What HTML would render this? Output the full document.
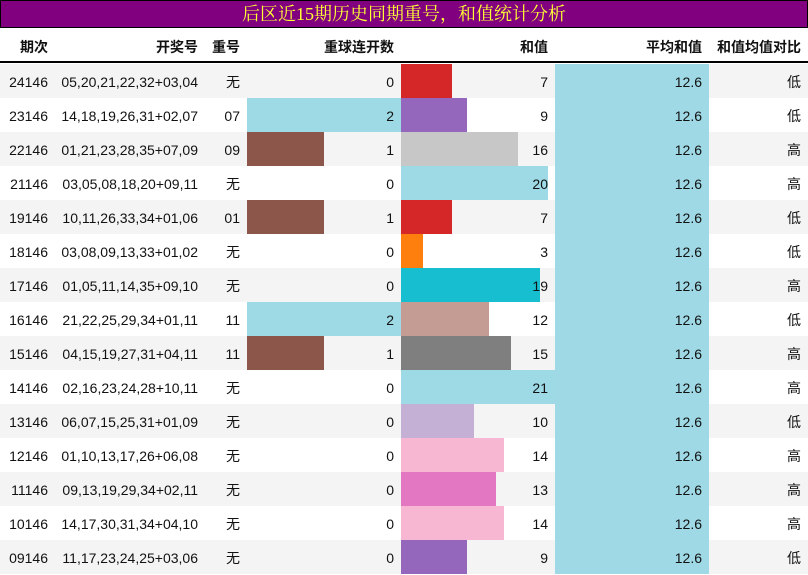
<!DOCTYPE html>
<html><head><meta charset="utf-8"><style>
*{margin:0;padding:0;box-sizing:border-box}
body{width:808px;height:575px;background:#fff;font-family:"Liberation Sans","Noto Sans CJK SC",sans-serif;font-size:14px;color:#111;position:relative;overflow:hidden}
.title{position:absolute;left:0;top:0;width:808px;height:28px;background:#800080;border:1px solid #000;color:#ffff33;font-family:"Liberation Serif","Noto Serif CJK SC",serif;font-size:18px;text-align:center;line-height:27px}
.hd{position:absolute;top:28px;height:35px;width:808px;border-bottom:2px solid #000;font-weight:bold}
.hd .c{top:2px}
.c{position:absolute;text-align:right;line-height:34px;white-space:nowrap;top:1px}
.row{position:absolute;left:0;width:808px;height:34px}
.bar{position:absolute;top:0;height:34px}
</style></head><body>
<div class="title">后区近15期历史同期重号，和值统计分析</div>
<div class="hd">
<div class="c" style="left:0;width:48px">期次</div>
<div class="c" style="left:55px;width:143px">开奖号</div>
<div class="c" style="left:205px;width:35px">重号</div>
<div class="c" style="left:247px;width:147px">重球连开数</div>
<div class="c" style="left:401px;width:147px">和值</div>
<div class="c" style="left:555px;width:147px">平均和值</div>
<div class="c" style="left:709px;width:92px">和值均值对比</div>
</div>
<div id="rows"></div>
<script>
var d=[["24146","05,20,21,22,32+03,04","无",0,7,"#d62728","低"],
["23146","14,18,19,26,31+02,07","07",2,9,"#9467bd","低"],
["22146","01,21,23,28,35+07,09","09",1,16,"#c7c7c7","高"],
["21146","03,05,08,18,20+09,11","无",0,20,"#9edae5","高"],
["19146","10,11,26,33,34+01,06","01",1,7,"#d62728","低"],
["18146","03,08,09,13,33+01,02","无",0,3,"#ff7f0e","低"],
["17146","01,05,11,14,35+09,10","无",0,19,"#17becf","高"],
["16146","21,22,25,29,34+01,11","11",2,12,"#c49c94","低"],
["15146","04,15,19,27,31+04,11","11",1,15,"#7f7f7f","高"],
["14146","02,16,23,24,28+10,11","无",0,21,"#9edae5","高"],
["13146","06,07,15,25,31+01,09","无",0,10,"#c5b0d5","低"],
["12146","01,10,13,17,26+06,08","无",0,14,"#f7b6d2","高"],
["11146","09,13,19,29,34+02,11","无",0,13,"#e377c2","高"],
["10146","14,17,30,31,34+04,10","无",0,14,"#f7b6d2","高"],
["09146","11,17,23,24,25+03,06","无",0,9,"#9467bd","低"]];
var h="";
d.forEach(function(r,i){
var bg=i%2==0?"#f4f4f4":"#fff";
var rb=r[3]==2?'<div class="bar" style="left:247px;width:154px;background:#9edae5"></div>':r[3]==1?'<div class="bar" style="left:247px;width:77px;background:#8c564b"></div>':'';
h+='<div class="row" style="top:'+(64+34*i)+'px;background:'+bg+'">'+rb+
'<div class="bar" style="left:401px;width:'+Math.round(r[4]*154/21)+'px;background:'+r[5]+'"></div>'+
'<div class="bar" style="left:555px;width:154px;background:#9fd9e5"></div>'+
'<div class="c" style="left:0;width:48px">'+r[0]+'</div>'+
'<div class="c" style="left:55px;width:143px">'+r[1]+'</div>'+
'<div class="c" style="left:205px;width:35px">'+r[2]+'</div>'+
'<div class="c" style="left:247px;width:147px">'+r[3]+'</div>'+
'<div class="c" style="left:401px;width:147px">'+r[4]+'</div>'+
'<div class="c" style="left:555px;width:147px">12.6</div>'+
'<div class="c" style="left:709px;width:92px">'+r[6]+'</div></div>';
});
document.getElementById("rows").innerHTML=h;
</script>
</body></html>
